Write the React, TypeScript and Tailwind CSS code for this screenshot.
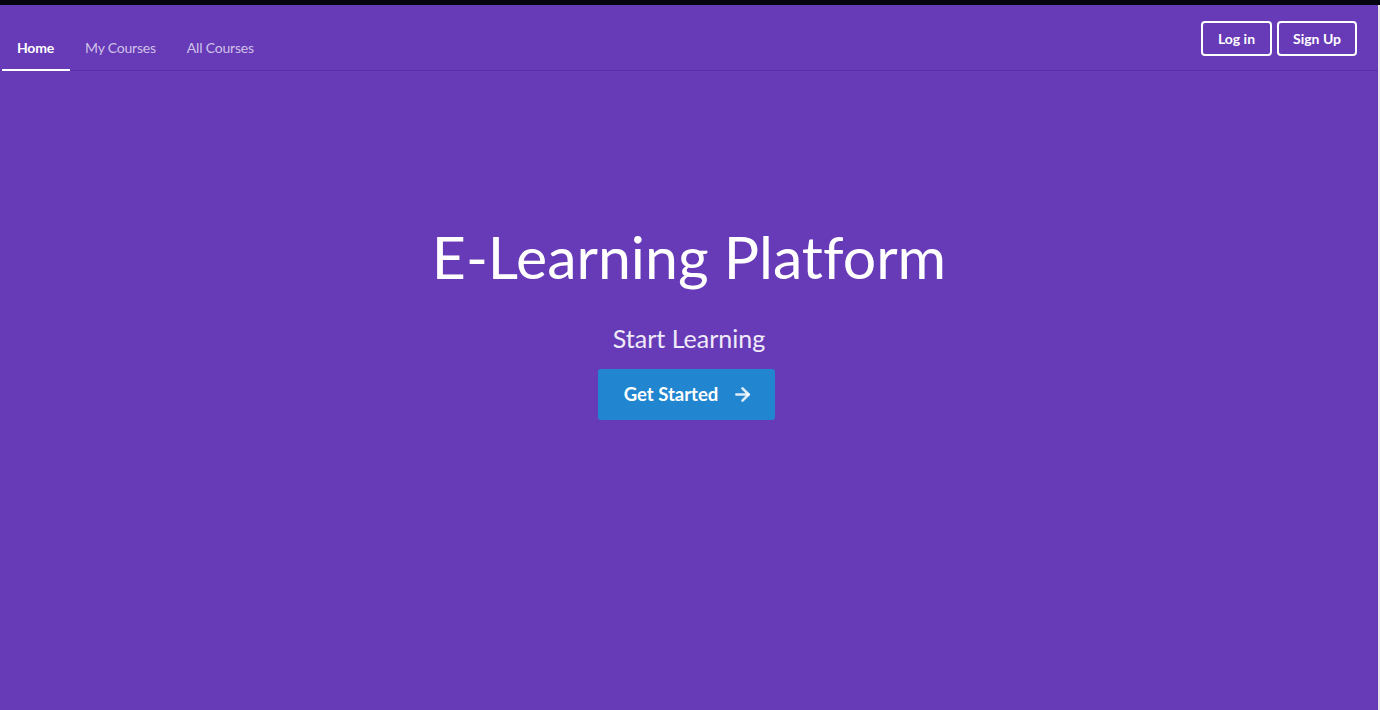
import { ArrowRight } from "lucide-react";

export default function App() {
    const tabs = ["Home", "My Courses", "All Courses"];

    return (
        <div className="flex flex-col h-[710px] w-[1380px] overflow-hidden bg-[#05050f] font-['Lato','Liberation_Sans',sans-serif] [font-variant-ligatures:none]">
            <div className="h-[5px] shrink-0" />
            <div className="flex flex-1 min-h-0">
                <div className="flex flex-col flex-1 bg-[#673ab7] text-white">
                    {/* top menu */}
                    <div className="flex items-end h-[66px] border-b border-[#5b2fa8]">
                        <div className="flex pl-[2px]">
                            {tabs.map((tab, i) => (
                                <div
                                    key={tab}
                                    className={`pl-[15px] pr-[16px] pb-[11px] text-[14px] tracking-[-0.2px] border-b-2 -mb-px ${i === 0 ? "font-bold text-white border-white" : "text-white/70 border-transparent"}`}
                                >
                                    {tab}
                                </div>
                            ))}
                        </div>
                        <div className="ml-auto flex gap-[5px] self-start mt-[16px] mr-[21px]">
                            <button className="h-[35px] w-[71px] rounded-[4px] border-2 border-white text-[14px] font-bold">
                                Log in
                            </button>
                            <button className="h-[35px] w-[80px] rounded-[4px] border-2 border-white text-[14px] font-bold">
                                Sign Up
                            </button>
                        </div>
                    </div>

                    {/* hero */}
                    <div className="flex flex-col items-center pt-[156px]">
                        <h1 className="text-[59px] leading-none font-normal">E-Learning Platform</h1>
                        <p className="mt-[40px] text-[25px] leading-none text-white/90">Start Learning</p>
                        <button className="mt-[18px] mr-[6px] pl-[5px] flex items-center gap-[14px] h-[51px] w-[177px] justify-center rounded-[3px] bg-[#2185d0] text-[18.5px] font-bold">
                            Get Started
                            <ArrowRight size={21} strokeWidth={3} className="text-white/85" />
                        </button>
                    </div>
                </div>
                <div className="w-[2px] bg-[#e6e6e6]" />
            </div>
        </div>
    );
}
